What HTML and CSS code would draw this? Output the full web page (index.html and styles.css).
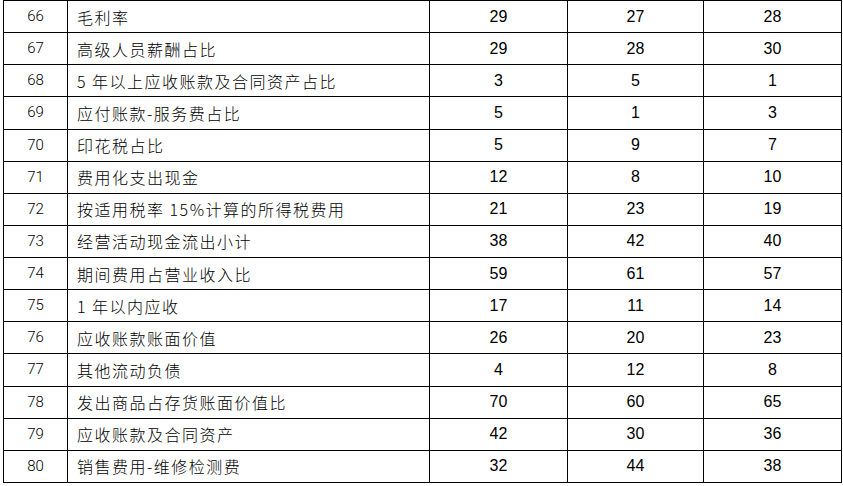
FILE: index.html
```html
<!DOCTYPE html>
<html lang="zh-CN">
<head>
<meta charset="utf-8">
<title>表格</title>
<link rel="stylesheet" href="styles.css">
</head>
<body>
<table class="grid">
  <colgroup>
    <col class="c-no">
    <col class="c-name">
    <col class="c-v1">
    <col class="c-v2">
    <col class="c-v3">
  </colgroup>
  <tbody>
    <tr><td class="no">66</td><td class="name">毛利率</td><td class="val">29</td><td class="val">27</td><td class="val">28</td></tr>
    <tr><td class="no">67</td><td class="name">高级人员薪酬占比</td><td class="val">29</td><td class="val">28</td><td class="val">30</td></tr>
    <tr><td class="no">68</td><td class="name">5 年以上应收账款及合同资产占比</td><td class="val">3</td><td class="val">5</td><td class="val">1</td></tr>
    <tr><td class="no">69</td><td class="name">应付账款-服务费占比</td><td class="val">5</td><td class="val">1</td><td class="val">3</td></tr>
    <tr><td class="no">70</td><td class="name">印花税占比</td><td class="val">5</td><td class="val">9</td><td class="val">7</td></tr>
    <tr><td class="no">71</td><td class="name">费用化支出现金</td><td class="val">12</td><td class="val">8</td><td class="val">10</td></tr>
    <tr><td class="no">72</td><td class="name">按适用税率 15%计算的所得税费用</td><td class="val">21</td><td class="val">23</td><td class="val">19</td></tr>
    <tr><td class="no">73</td><td class="name">经营活动现金流出小计</td><td class="val">38</td><td class="val">42</td><td class="val">40</td></tr>
    <tr><td class="no">74</td><td class="name">期间费用占营业收入比</td><td class="val">59</td><td class="val">61</td><td class="val">57</td></tr>
    <tr><td class="no">75</td><td class="name">1 年以内应收</td><td class="val">17</td><td class="val">11</td><td class="val">14</td></tr>
    <tr><td class="no">76</td><td class="name">应收账款账面价值</td><td class="val">26</td><td class="val">20</td><td class="val">23</td></tr>
    <tr><td class="no">77</td><td class="name">其他流动负债</td><td class="val">4</td><td class="val">12</td><td class="val">8</td></tr>
    <tr><td class="no">78</td><td class="name">发出商品占存货账面价值比</td><td class="val">70</td><td class="val">60</td><td class="val">65</td></tr>
    <tr><td class="no">79</td><td class="name">应收账款及合同资产</td><td class="val">42</td><td class="val">30</td><td class="val">36</td></tr>
    <tr><td class="no">80</td><td class="name">销售费用-维修检测费</td><td class="val">32</td><td class="val">44</td><td class="val">38</td></tr>
  </tbody>
</table>
</body>
</html>
```
FILE: styles.css
```css
html, body {
  margin: 0;
  padding: 0;
  background: #ffffff;
}

.grid {
  margin: 0 0 0 3px;
  border-collapse: collapse;
  table-layout: fixed;
  width: 839px;
  color: #000000;
}

.c-no { width: 64px; }
.c-name { width: 362px; }
.c-v1 { width: 138px; }
.c-v2 { width: 136px; }
.c-v3 { width: 138px; }

.grid tr {
  height: 32.13px;
}

.grid td {
  border: 1px solid #000000;
  padding: 0;
  vertical-align: middle;
  white-space: nowrap;
  overflow: hidden;
  line-height: 1;
}

.no {
  text-align: center;
  font-family: Roboto, "Liberation Sans", sans-serif;
  font-size: 15px;
  font-weight: 300;
}

.name {
  padding-left: 9px !important;
  font-family: "Noto Sans CJK SC", "Liberation Sans", sans-serif;
  font-size: 16px;
  font-weight: 300;
  letter-spacing: 1.5px;
}

.val {
  text-align: center;
  font-family: "Liberation Sans", Arial, sans-serif;
  font-size: 16px;
}
```
